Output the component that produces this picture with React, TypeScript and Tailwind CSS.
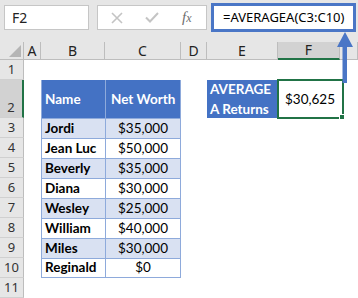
import React from "react";

const cols = [
  { k: "A", w: "w-[17px]" },
  { k: "B", w: "w-[64px]" },
  { k: "C", w: "w-[76px]" },
  { k: "D", w: "w-[26px]" },
  { k: "E", w: "w-[71px]" },
  { k: "F", w: "w-[62px]" },
  { k: "G", w: "w-[18px]" },
];

const data: [string, string][] = [
  ["Jordi", "$35,000"],
  ["Jean Luc", "$50,000"],
  ["Beverly", "$35,000"],
  ["Diana", "$30,000"],
  ["Wesley", "$25,000"],
  ["William", "$40,000"],
  ["Miles", "$30,000"],
  ["Reginald", "$0"],
];

const cellFont = "font-['Lato','Liberation_Sans',sans-serif] text-[13.5px] text-black whitespace-nowrap";
const uiFont = "font-['Noto_Sans','Liberation_Sans',sans-serif]";

function RowHead({ n, tall, active }: { n: number; tall?: boolean; active?: boolean }) {
  return (
    <div
      className={`w-[24px] shrink-0 flex items-end justify-center pb-[1px] border-b border-[#d0d0d0] ${
        active ? "bg-[#d2d2d2] border-r-2 border-r-[#217346]" : "bg-[#e6e6e6] border-r border-r-[#bdbdbd]"
      } ${tall ? "h-[38px]" : "h-[20px]"} ${uiFont} text-[13px] leading-[18px] text-[#333]`}
    >
      {n}
    </div>
  );
}

export default function App() {
  return (
    <div className="relative w-[358px] h-[298px] overflow-hidden bg-white">
      {/* formula bar */}
      <div className="h-[42px] bg-[#e6e6e6] flex items-start">
        <div
          className={`ml-[4px] mt-[5px] w-[85px] h-[25px] bg-white border border-[#c6c6c6] flex items-center pl-[7px] ${uiFont} text-[14px] text-[#222]`}
        >
          F2
        </div>
        <div className="ml-[8px] mt-[5px] w-[110px] h-[25px] bg-white border border-[#c6c6c6] flex items-center">
          <svg width="12" height="12" viewBox="0 0 12 12" className="ml-[13px]">
            <path d="M1 1 L11 11 M11 1 L1 11" stroke="#c4c4c4" strokeWidth="1.6" fill="none" />
          </svg>
          <svg width="14" height="11" viewBox="0 0 14 11" className="ml-[22px]">
            <path d="M1 5.5 L5 9.5 L13 1" stroke="#c4c4c4" strokeWidth="2" fill="none" />
          </svg>
          <span className="ml-[23px] font-['Liberation_Serif',serif] italic text-[15px] text-[#6e6e6e] leading-none">
            f<span className="text-[12px]">x</span>
          </span>
        </div>
        <div
          className={`ml-[4px] mt-[3px] w-[145px] h-[29px] bg-white border-[3px] border-[#4a76c6] flex items-center pl-[9px] ${uiFont} text-[13px] text-black whitespace-nowrap`}
        >
          =AVERAGEA(C3:C10)
        </div>
      </div>

      {/* column headers */}
      <div className={`flex h-[18px] bg-[#e6e6e6] ${uiFont} text-[14px] leading-[16px] text-[#222]`}>
        <div className="w-[24px] shrink-0 border-r border-b border-[#bdbdbd] flex items-end justify-end pr-[2px] pb-[2px]">
          <svg width="12" height="12" viewBox="0 0 12 12">
            <path d="M12 0 L12 12 L0 12 Z" fill="#b5b5b5" />
          </svg>
        </div>
        {cols.map((c) => (
          <div
            key={c.k}
            className={`${c.w} shrink-0 flex items-center justify-center ${
              c.k === "F"
                ? "bg-[#d2d2d2] border-b-2 border-b-[#217346] border-r border-r-[#bdbdbd]"
                : "border-b border-b-[#bdbdbd] border-r border-r-[#bdbdbd]"
            }`}
          >
            {c.k !== "G" ? c.k : ""}
          </div>
        ))}
      </div>

      {/* row 1 */}
      <div className="flex h-[20px]">
        <RowHead n={1} />
      </div>

      {/* row 2 */}
      <div className={`flex h-[38px] ${cellFont}`}>
        <RowHead n={2} tall active />
        <div className="w-[17px] shrink-0" />
        <div className="w-[64px] shrink-0 bg-[#4472c4] border-l border-[#8eaadb] flex items-center pl-[3px] text-white font-bold">
          Name
        </div>
        <div className="w-[76px] shrink-0 bg-[#4472c4] border-l border-r border-[#8eaadb] flex items-center pl-[5px] text-white font-bold">
          Net Worth
        </div>
        <div className="w-[26px] shrink-0" />
        <div className="w-[71px] shrink-0 bg-[#4472c4] flex flex-col justify-center pl-[3px] text-white font-bold leading-[20px]">
          <span>AVERAGE</span>
          <span>A Returns</span>
        </div>
        <div className="relative w-[62px] shrink-0 flex items-center justify-center pl-[2px]">
          $30,625
          <div className="absolute -left-[1px] -top-[1px] -right-[4px] -bottom-[1px] border-2 border-[#217346]" />
          <div className="absolute -right-[5px] -bottom-[2px] w-[6px] h-[6px] bg-[#217346] border border-white" />
        </div>
      </div>

      {/* rows 3-10 */}
      {data.map(([name, val], i) => {
        const band = i % 2 === 0 ? "bg-[#d9e1f2]" : "bg-white";
        return (
          <div key={name} className={`flex h-[20px] ${cellFont}`}>
            <RowHead n={i + 3} />
            <div className="w-[17px] shrink-0" />
            <div
              className={`w-[64px] shrink-0 ${band} border-l border-t border-[#8eaadb] flex items-end pb-[1px] pl-[3px] font-bold leading-[18px] ${
                i === data.length - 1 ? "border-b" : ""
              }`}
            >
              {name}
            </div>
            <div
              className={`w-[76px] shrink-0 ${band} border-l border-r border-t border-[#8eaadb] flex items-end justify-center pb-[1px] leading-[18px] ${
                i === data.length - 1 ? "border-b" : ""
              }`}
            >
              {val}
            </div>
          </div>
        );
      })}

      {/* row 11 */}
      <div className="flex h-[20px]">
        <RowHead n={11} />
      </div>

      {/* arrow overlay */}
      <svg className="absolute left-[336px] top-[32px]" width="18" height="52" viewBox="0 0 18 52">
        <path d="M9 0 L17 15 L1 15 Z" fill="#4a76c6" />
        <rect x="6.5" y="14" width="4.5" height="37" fill="#4a76c6" />
      </svg>
    </div>
  );
}
